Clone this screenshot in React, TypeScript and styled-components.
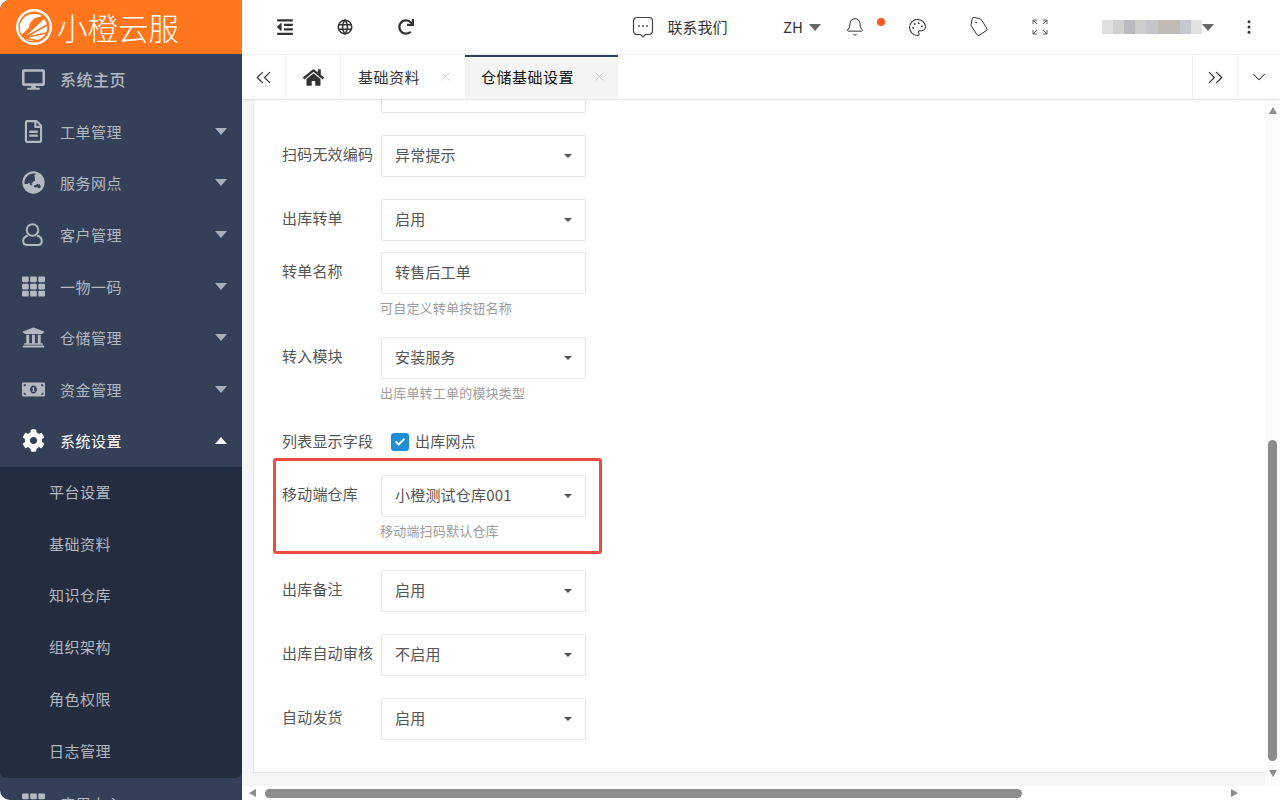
import { useState } from 'react';
import styled, { createGlobalStyle } from 'styled-components';
import {
  FaDesktop,
  FaRegFileAlt,
  FaGlobeAsia,
  FaTh,
  FaUniversity,
  FaMoneyBillAlt,
  FaCog,
  FaHome,
  FaOutdent,
  FaCheck,
  FaRedo,
} from 'react-icons/fa';
import { TbWorld } from 'react-icons/tb';
import {
  Bell,
  Palette,
  Tag,
  ChevronsLeft,
  ChevronsRight,
  ChevronDown,
  X,
  EllipsisVertical,
} from 'lucide-react';

const FONT = '"Noto Sans CJK SC", "Noto Sans", sans-serif';

const GlobalStyle = createGlobalStyle`
  html, body {
    margin: 0;
    padding: 0;
    background: #ffffff;
    font-family: ${FONT};
  }
  * { box-sizing: border-box; }
`;

const Shell = styled.div`
  display: flex;
  width: 1280px;
  height: 800px;
  overflow: hidden;
  border-radius: 10px;
  background: #ffffff;
`;

const Sidebar = styled.aside`
  flex: 0 0 242px;
  display: flex;
  flex-direction: column;
  height: 800px;
  overflow: hidden;
  background: #344058;
`;

const Brand = styled.div`
  flex: 0 0 54px;
  display: flex;
  align-items: center;
  gap: 4px;
  padding-left: 15px;
  background: #ff761d;
  color: #ffffff;
`;

const BrandName = styled.span`
  font-size: 30.5px;
  font-weight: 300;
  line-height: 54px;
`;

const MenuList = styled.nav`
  display: flex;
  flex-direction: column;
`;

const MenuItem = styled.div<{ $active?: boolean }>`
  flex: 0 0 51.6px;
  display: flex;
  align-items: center;
  padding: 0 15px 0 22px;
  color: ${(p) => (p.$active ? '#ffffff' : '#b4b8c0')};
  font-size: 15px;
  letter-spacing: 0.5px;
`;

const MenuIcon = styled.span`
  flex: 0 0 38px;
  display: flex;
  align-items: center;
  font-size: 23px;
`;

const MenuLabel = styled.span<{ $strong?: boolean }>`
  flex: 1;
  padding-bottom: ${(p) => (p.$strong ? '2px' : '0')};
  font-size: ${(p) => (p.$strong ? '16px' : '15px')};
  font-weight: ${(p) => (p.$strong ? 500 : 400)};
`;

const Caret = styled.span<{ $up?: boolean }>`
  width: 0;
  height: 0;
  border-left: 6.5px solid transparent;
  border-right: 6.5px solid transparent;
  ${(p) =>
    p.$up
      ? `border-bottom: 7px solid #ffffff;`
      : `border-top: 7px solid #a9aeb8;`}
`;

const SubMenu = styled.div`
  flex: 0 0 311px;
  display: flex;
  flex-direction: column;
  background: #232d3f;
  border-radius: 0 0 6px 6px;
`;

const SubItem = styled.div`
  flex: 0 0 51.7px;
  display: flex;
  align-items: center;
  padding: 0 0 2px 49px;
  color: #b4b8c0;
  font-size: 15px;
  letter-spacing: 0.5px;
`;

const Main = styled.main`
  flex: 1;
  min-width: 0;
  display: flex;
  flex-direction: column;
  background: #f5f5f5;
`;

const TopBar = styled.header`
  flex: 0 0 55px;
  display: flex;
  align-items: center;
  background: #ffffff;
  border-bottom: 1px solid #eeeeee;
  color: #333333;
  font-size: 15px;
`;

const TopSlot = styled.div<{ $w: number; $ml?: number }>`
  flex: 0 0 ${(p) => p.$w}px;
  display: flex;
  align-items: center;
  justify-content: center;
  gap: 6px;
  height: 100%;
  margin-left: ${(p) => p.$ml ?? 0}px;
  position: relative;
`;

const ContactText = styled.span`
  margin-left: 7px;
  padding-bottom: 2px;
`;

const LangText = styled.span`
  padding-bottom: 2px;
`;

const Spacer = styled.div`
  flex: 1;
`;

const Dot = styled.span`
  position: absolute;
  top: 18px;
  right: -10px;
  width: 8px;
  height: 8px;
  border-radius: 50%;
  background: #ff5722;
`;

const SmallCaret = styled.span`
  width: 0;
  height: 0;
  border-left: 6px solid transparent;
  border-right: 6px solid transparent;
  border-top: 7px solid #666666;
`;

const BlurName = styled.div`
  display: flex;
  align-items: center;
  height: 14px;
`;

const BlurCell = styled.span<{ $c: string }>`
  width: 11.2px;
  height: 14px;
  background: ${(p) => p.$c};
`;

const TagIcon = styled(Tag)`
  transform: rotate(12deg);
`;

const TabBar = styled.div`
  flex: 0 0 44px;
  display: flex;
  align-items: stretch;
  background: #ffffff;
  box-shadow: 0 1px 2px rgba(0, 0, 0, 0.12);
  position: relative;
  color: #333333;
  font-size: 15px;
`;

const TabCell = styled.div<{ $w: number; $side?: 'left' | 'right' }>`
  flex: 0 0 ${(p) => p.$w}px;
  display: flex;
  align-items: center;
  justify-content: center;
  border-${(p) => p.$side ?? 'right'}: 1px solid #f1f1f1;
`;

const Tab = styled.div<{ $active?: boolean; $w: number }>`
  flex: 0 0 ${(p) => p.$w}px;
  display: flex;
  align-items: center;
  padding: 0 0 3px ${(p) => (p.$active ? 16 : 17)}px;
  background: ${(p) => (p.$active ? '#f4f4f4' : '#ffffff')};
  border-top: 2px solid ${(p) => (p.$active ? '#33405a' : 'transparent')};
  color: ${(p) => (p.$active ? '#111111' : '#333333')};
  letter-spacing: 0.5px;
`;

const TabClose = styled.span<{ $gap: number }>`
  display: flex;
  margin-left: ${(p) => p.$gap}px;
  color: #c4c4c4;
`;

const Body = styled.div`
  flex: 1;
  min-height: 0;
  display: flex;
`;

const Workspace = styled.div`
  flex: 1;
  min-width: 0;
  padding: 0 0 13px 11px;
`;

const Panel = styled.section`
  height: 100%;
  padding-left: 28px;
  background: #ffffff;
  border-left: 1px solid #e6e6e6;
  border-bottom: 1px solid #e6e6e6;
  color: #555555;
  font-size: 15px;
`;

const ClippedInput = styled.div`
  width: 205px;
  height: 14px;
  margin-left: 99px;
  border: 1px solid #e6e6e6;
  border-top: 0;
  border-radius: 0 0 2px 2px;
`;

const Field = styled.div<{ $top: number }>`
  display: flex;
  align-items: flex-start;
  margin-top: ${(p) => p.$top}px;
`;

const FieldLabel = styled.label`
  flex: 0 0 99px;
  line-height: 38px;
  white-space: nowrap;
  letter-spacing: 0.2px;
`;

const Control = styled.div`
  flex: 0 0 205px;
  display: flex;
  align-items: center;
  justify-content: space-between;
  height: 42px;
  padding: 0 13px 4px 13px;
  border: 1px solid #e6e6e6;
  border-radius: 2px;
  background: #ffffff;
  letter-spacing: 0.2px;
`;

const SelectArrow = styled.span`
  width: 0;
  height: 0;
  margin-top: 4px;
  border-left: 4.5px solid transparent;
  border-right: 4.5px solid transparent;
  border-top: 4.5px solid #555555;
`;

const Hint = styled.div`
  margin: 4px 0 0 98px;
  line-height: 19px;
  color: #9d9d9d;
  font-size: 13px;
  letter-spacing: 0.2px;
`;

const CheckRow = styled.div`
  display: flex;
  align-items: center;
  margin-top: 27px;
  height: 26px;
  letter-spacing: 0.2px;
`;

const CheckLabel = styled.span`
  flex: 0 0 109px;
  padding-bottom: 3px;
`;

const CheckText = styled.span`
  padding-bottom: 3px;
`;

const Checkbox = styled.span`
  flex: 0 0 18px;
  height: 18px;
  display: flex;
  align-items: center;
  justify-content: center;
  margin-right: 6px;
  background: #1e8fd5;
  border-radius: 3px;
  color: #ffffff;
  font-size: 10px;
`;

const Highlight = styled.div`
  width: 329px;
  height: 96px;
  margin: 3px 0 0 -9px;
  padding: 14px 0 0 6px;
  border: 3px solid #ee4c42;
  border-radius: 3px;
`;

const VScroll = styled.div`
  flex: 0 0 15px;
  display: flex;
  flex-direction: column;
  align-items: center;
  padding-bottom: 9px;
  background: #fbfbfb;
`;

const VTrack = styled.div`
  flex: 1;
  width: 100%;
  display: flex;
  flex-direction: column;
  justify-content: flex-end;
  align-items: center;
  padding-bottom: 9px;
`;

const VThumb = styled.div`
  width: 9px;
  height: 321px;
  border-radius: 5px;
  background: #8c8c8c;
`;

const Arrow = styled.span<{ $dir: 'up' | 'down' | 'left' | 'right' }>`
  flex: 0 0 auto;
  width: 0;
  height: 0;
  border-style: solid;
  border-color: transparent;
  ${(p) =>
    p.$dir === 'up'
      ? 'border-width: 0 4.5px 7px; border-bottom-color: #8c8c8c; margin-top: 8px;'
      : p.$dir === 'down'
      ? 'border-width: 7px 4.5px 0; border-top-color: #8c8c8c;'
      : p.$dir === 'left'
      ? 'border-width: 4.5px 7px 4.5px 0; border-right-color: #8c8c8c;'
      : 'border-width: 4.5px 0 4.5px 7px; border-left-color: #8c8c8c;'}
`;

const HScroll = styled.div`
  flex: 0 0 14px;
  display: flex;
  align-items: center;
  padding: 0 42px 0 7px;
  background: #ffffff;
`;

const HTrack = styled.div`
  flex: 1;
  padding-left: 9px;
`;

const HThumb = styled.div`
  width: 757px;
  height: 9px;
  border-radius: 5px;
  background: #8c8c8c;
`;

const FullscreenIcon = () => (
  <svg width="16" height="16" viewBox="0 0 16 16" fill="none" stroke="#555" strokeWidth="1">
    <path d="M1 5V1h4M1 1l4 4M11 1h4v4M15 1l-4 4M1 11v4h4M1 15l4-4M15 11v4h-4M15 15l-4-4" />
  </svg>
);

const ChatIcon = () => (
  <svg width="22" height="22" viewBox="0 0 22 22" fill="none" stroke="#444" strokeWidth="1.2">
    <path d="M5 1.5h12a3.5 3.5 0 0 1 3.5 3.5v10a3.5 3.5 0 0 1-3.5 3.5h-3.5L11 21l-2.5-2.5H5A3.5 3.5 0 0 1 1.5 15V5A3.5 3.5 0 0 1 5 1.5Z" />
    <circle cx="7" cy="10" r="0.9" fill="#444" stroke="none" />
    <circle cx="11" cy="10" r="0.9" fill="#444" stroke="none" />
    <circle cx="15" cy="10" r="0.9" fill="#444" stroke="none" />
  </svg>
);

const UserIcon = () => (
  <svg width="21" height="23" viewBox="0 0 21 23" fill="none" stroke="currentColor" strokeWidth="2">
    <circle cx="10.5" cy="7" r="5.8" />
    <path d="M6 12.5C3 13.5 1.2 15.5 1.2 18c0 2.5 1.6 4 4 4h10.6c2.4 0 4-1.5 4-4 0-2.5-1.8-4.5-4.8-5.5" />
  </svg>
);

const OrangeLogo = () => (
  <svg width="38" height="38" viewBox="0 0 38 38">
    <circle cx="19" cy="19" r="18" fill="#ffffff" />
    <circle cx="19" cy="19" r="15.6" fill="#ff761d" />
    <path d="M7 27 C1 17 8 5 20 6 C24 6 26 7 28 9 C21 8 14 13 14 20 Z" fill="#ffffff" />
    <path d="M9 30 L29 11 C34 17 33 25 28 29 C22 34 14 34 9 30 Z" fill="#ffffff" />
    <path d="M9 30 L24 33 M9 30 L31 25 M9 30 L32 17" stroke="#ff761d" strokeWidth="1.6" />
    <path d="M7 28 L28 8" stroke="#ff761d" strokeWidth="2.4" />
  </svg>
);

const menu = [
  { label: '系统主页', icon: <FaDesktop />, strong: true },
  { label: '工单管理', icon: <FaRegFileAlt />, caret: true },
  { label: '服务网点', icon: <FaGlobeAsia />, caret: true },
  { label: '客户管理', icon: <UserIcon />, caret: true },
  { label: '一物一码', icon: <FaTh />, caret: true },
  { label: '仓储管理', icon: <FaUniversity />, caret: true },
  { label: '资金管理', icon: <FaMoneyBillAlt />, caret: true },
];

const subMenu = ['平台设置', '基础资料', '知识仓库', '组织架构', '角色权限', '日志管理'];

const blur = ['#e0e0df', '#d0d0ce', '#b9babd', '#cdcdcb', '#c4c6ca', '#bfbcb7', '#bfbcb7', '#c6c9cf', '#e2e2e2'];

export default function App() {
  const [checked] = useState(true);

  return (
    <>
      <GlobalStyle />
      <Shell>
        <Sidebar>
          <Brand>
            <OrangeLogo />
            <BrandName>小橙云服</BrandName>
          </Brand>
          <MenuList>
            {menu.map((m) => (
              <MenuItem key={m.label}>
                <MenuIcon>{m.icon}</MenuIcon>
                <MenuLabel $strong={m.strong}>{m.label}</MenuLabel>
                {m.caret && <Caret />}
              </MenuItem>
            ))}
            <MenuItem $active>
              <MenuIcon>
                <FaCog />
              </MenuIcon>
              <MenuLabel>系统设置</MenuLabel>
              <Caret $up />
            </MenuItem>
          </MenuList>
          <SubMenu>
            {subMenu.map((s) => (
              <SubItem key={s}>{s}</SubItem>
            ))}
          </SubMenu>
          <MenuItem>
            <MenuIcon>
              <FaTh />
            </MenuIcon>
            <MenuLabel>应用中心</MenuLabel>
            <Caret />
          </MenuItem>
        </Sidebar>

        <Main>
          <TopBar>
            <TopSlot $w={85}>
              <FaOutdent size={18} color="#333" />
            </TopSlot>
            <TopSlot $w={36}>
              <TbWorld size={18} color="#333" />
            </TopSlot>
            <TopSlot $w={86}>
              <FaRedo size={16} color="#333" />
            </TopSlot>
            <Spacer />
            <TopSlot $w={96}>
              <ChatIcon />
              <ContactText>联系我们</ContactText>
            </TopSlot>
            <TopSlot $w={60} $ml={44}>
              <LangText>ZH</LangText>
              <SmallCaret />
            </TopSlot>
            <TopSlot $w={40} $ml={3}>
              <Bell size={20} strokeWidth={1.2} color="#333" />
              <Dot />
            </TopSlot>
            <TopSlot $w={50} $ml={17}>
              <Palette size={19} strokeWidth={1.3} color="#333" />
            </TopSlot>
            <TopSlot $w={50} $ml={12}>
              <TagIcon size={20} strokeWidth={1.1} color="#333" />
            </TopSlot>
            <TopSlot $w={56} $ml={8}>
              <FullscreenIcon />
            </TopSlot>
            <TopSlot $w={120} $ml={30}>
              <BlurName>
                {blur.map((c, i) => (
                  <BlurCell key={i} $c={c} />
                ))}
                <SmallCaret />
              </BlurName>
            </TopSlot>
            <TopSlot $w={62}>
              <EllipsisVertical size={18} color="#333" />
            </TopSlot>
          </TopBar>

          <TabBar>
            <TabCell $w={44}>
              <ChevronsLeft size={25} strokeWidth={1.1} />
            </TabCell>
            <TabCell $w={55}>
              <FaHome size={21} />
            </TabCell>
            <Tab $w={124}>
              基础资料
              <TabClose $gap={18}>
                <X size={15} strokeWidth={1.2} />
              </TabClose>
            </Tab>
            <Tab $w={153} $active>
              仓储基础设置
              <TabClose $gap={18}>
                <X size={15} strokeWidth={1.2} />
              </TabClose>
            </Tab>
            <Spacer />
            <TabCell $w={45} $side="left">
              <ChevronsRight size={25} strokeWidth={1.1} />
            </TabCell>
            <TabCell $w={43} $side="left">
              <ChevronDown size={22} strokeWidth={1.1} />
            </TabCell>
          </TabBar>

          <Body>
            <Workspace>
              <Panel>
                <ClippedInput />
                <Field $top={22}>
                  <FieldLabel>扫码无效编码</FieldLabel>
                  <Control>
                    异常提示
                    <SelectArrow />
                  </Control>
                </Field>
                <Field $top={22}>
                  <FieldLabel>出库转单</FieldLabel>
                  <Control>
                    启用
                    <SelectArrow />
                  </Control>
                </Field>
                <Field $top={11}>
                  <FieldLabel>转单名称</FieldLabel>
                  <Control>转售后工单</Control>
                </Field>
                <Hint>可自定义转单按钮名称</Hint>
                <Field $top={20}>
                  <FieldLabel>转入模块</FieldLabel>
                  <Control>
                    安装服务
                    <SelectArrow />
                  </Control>
                </Field>
                <Hint>出库单转工单的模块类型</Hint>
                <CheckRow>
                  <CheckLabel>列表显示字段</CheckLabel>
                  <Checkbox>{checked && <FaCheck />}</Checkbox>
                  <CheckText>出库网点</CheckText>
                </CheckRow>
                <Highlight>
                  <Field $top={0}>
                    <FieldLabel>移动端仓库</FieldLabel>
                    <Control>
                      小橙测试仓库001
                      <SelectArrow />
                    </Control>
                  </Field>
                  <Hint>移动端扫码默认仓库</Hint>
                </Highlight>
                <Field $top={16}>
                  <FieldLabel>出库备注</FieldLabel>
                  <Control>
                    启用
                    <SelectArrow />
                  </Control>
                </Field>
                <Field $top={22}>
                  <FieldLabel>出库自动审核</FieldLabel>
                  <Control>
                    不启用
                    <SelectArrow />
                  </Control>
                </Field>
                <Field $top={22}>
                  <FieldLabel>自动发货</FieldLabel>
                  <Control>
                    启用
                    <SelectArrow />
                  </Control>
                </Field>
              </Panel>
            </Workspace>
            <VScroll>
              <Arrow $dir="up" />
              <VTrack>
                <VThumb />
              </VTrack>
              <Arrow $dir="down" />
            </VScroll>
          </Body>

          <HScroll>
            <Arrow $dir="left" />
            <HTrack>
              <HThumb />
            </HTrack>
            <Arrow $dir="right" />
          </HScroll>
        </Main>
      </Shell>
    </>
  );
}
